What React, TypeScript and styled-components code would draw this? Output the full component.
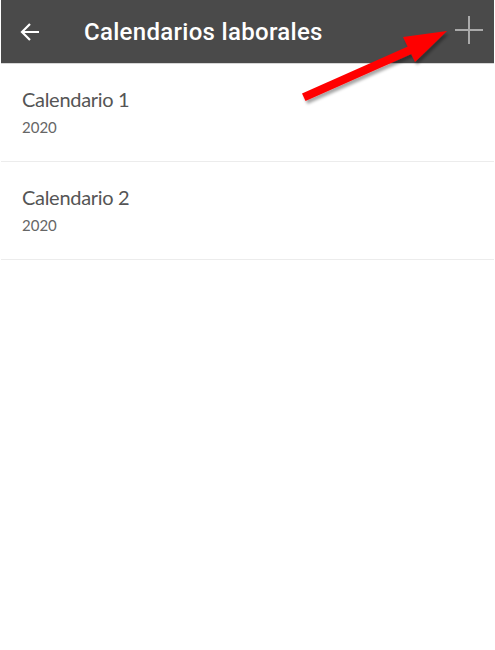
import styled, { createGlobalStyle } from "styled-components";

const GlobalStyle = createGlobalStyle`
  html, body {
    margin: 0;
    padding: 0;
    background: #fff;
  }
  body {
    font-family: Lato, "Noto Sans", sans-serif;
  }
`;

const Screen = styled.main`
  position: relative;
  width: 493px;
  min-height: 650px;
  margin-left: 1px;
  background: #fff;
`;

const Toolbar = styled.header`
  display: flex;
  align-items: center;
  height: 63px;
  padding: 0 10px 0 18px;
  background: #4a4a4a;
  border-bottom: 1px solid #d6d6d6;
`;

const IconButton = styled.button<{ $lift?: number }>`
  display: flex;
  align-items: center;
  justify-content: center;
  padding: 0;
  margin-bottom: ${(p) => p.$lift ?? 0}px;
  border: 0;
  background: none;
  cursor: pointer;
`;

const Title = styled.h1`
  flex: 1;
  margin: 0 0 0 43px;
  font-family: Roboto, "Liberation Sans", sans-serif;
  font-size: 24px;
  font-weight: 500;
  letter-spacing: 0.3px;
  line-height: normal;
  color: #fff;
`;

const List = styled.ul`
  margin: 0;
  padding: 0;
  list-style: none;
`;

const Row = styled.li`
  display: flex;
  flex-direction: column;
  gap: 7px;
  height: 98px;
  padding: 23px 21px 0;
  box-sizing: border-box;
  border-bottom: 1px solid #ececec;
`;

const RowTitle = styled.span`
  font-size: 20px;
  letter-spacing: -0.3px;
  line-height: 24px;
  color: #555;
`;

const RowYear = styled.span`
  font-size: 15px;
  line-height: 18px;
  color: #666;
`;

const Annotation = styled.svg`
  position: absolute;
  left: 0;
  top: 0;
  pointer-events: none;
`;

type Calendar = {
  name: string;
  year: number;
};

const calendars: Array<Calendar> = [
  { name: "Calendario 1", year: 2020 },
  { name: "Calendario 2", year: 2020 },
];

const App = () => {
  return (
    <Screen>
      <GlobalStyle />
      <Toolbar>
        <IconButton aria-label="Volver">
          <svg width="22" height="22" viewBox="0 0 22 22">
            <path
              d="M20 11H3M11 3l-8 8 8 8"
              fill="none"
              stroke="#fff"
              strokeWidth="2.2"
            />
          </svg>
        </IconButton>
        <Title>Calendarios laborales</Title>
        <IconButton aria-label="Añadir" $lift={3}>
          <svg width="30" height="30" viewBox="0 0 30 30">
            <path d="M15 1v28M1 15h28" stroke="#aaa" strokeWidth="2" />
          </svg>
        </IconButton>
      </Toolbar>
      <List>
        {calendars.map((item, index) => (
          <Row key={index}>
            <RowTitle>{item.name}</RowTitle>
            <RowYear>{item.year}</RowYear>
          </Row>
        ))}
      </List>
      <Annotation width="493" height="120" viewBox="0 0 493 120">
        <defs>
          <filter id="shade" x="-10%" y="-10%" width="130%" height="140%">
            <feDropShadow dx="2" dy="3" stdDeviation="1.5" floodColor="#000" floodOpacity="0.35" />
          </filter>
        </defs>
        <g filter="url(#shade)" fill="#ff0000">
          <path d="M301 93.5 L408 46 L411.5 53.5 L304.5 101 Z" />
          <path d="M446 31 L402 37 L414 62 Z" />
        </g>
      </Annotation>
    </Screen>
  );
};

export default App;
